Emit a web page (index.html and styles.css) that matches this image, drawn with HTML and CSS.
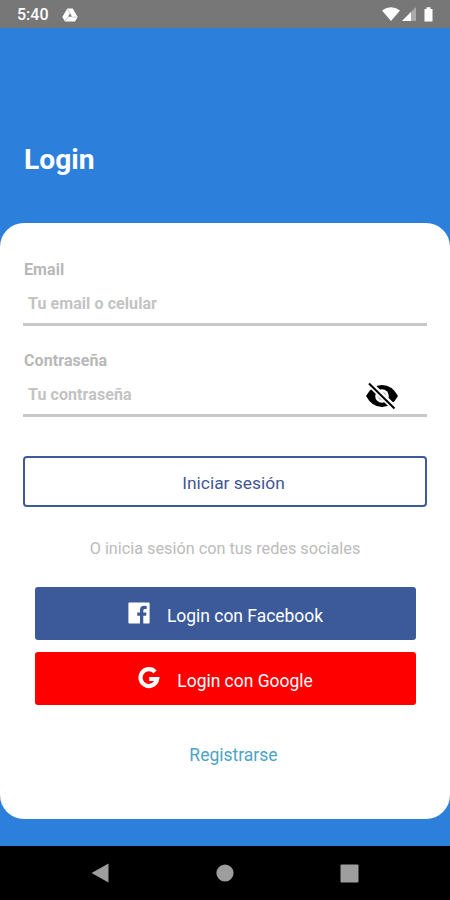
FILE: index.html
```html
<!DOCTYPE html>
<html lang="es">
<head>
<meta charset="utf-8">
<title>Login</title>
<link rel="stylesheet" href="styles.css">
</head>
<body>
<header class="status">
  <span class="time">5:40</span>
  <svg class="drive" width="16" height="14" viewBox="0 0 16 14"><path d="M5.3.5h5.4l5 8.6-2.7 4.5H3L.3 9.1z" fill="#fff"/><path d="M8 5.2 10 8.7H6z" fill="#777"/><path d="M5.6 1.2 8 5M15 9.1h-4.7M3.2 13 5.7 9" stroke="#aaa" stroke-width=".6"/></svg>
  <svg class="signals" width="54" height="16" viewBox="0 0 54 16"><path d="M0 3.5Q9-3 18 3.5L9 14z" fill="#fff"/><path d="M34 0v14H20z" fill="#aaa"/><path d="M29 5v9h-9z" fill="#fff"/><path d="M42.5 2h2V.3h4V2h2v12.5h-8z" fill="#fff"/></svg>
</header>
<main class="screen">
  <h1>Login</h1>
  <form class="card">
    <div class="field">
      <label>Email</label>
      <div class="input"><span>Tu email o celular</span></div>
    </div>
    <div class="field">
      <label>Contraseña</label>
      <div class="input"><span>Tu contraseña</span>
        <svg class="eye" width="34" height="28" viewBox="0 0 34 28"><path d="M1 14Q7 3 17 3t16 11Q27 25 17 25T1 14z"/><circle cx="17" cy="14" r="6.8" fill="#fff"/><circle cx="17" cy="14" r="4.6" fill="#ddd"/><path d="M17.5 10.8a3 3 0 0 1 3 3M14 14.5a3 3 0 0 0 2.6 2.8" fill="none" stroke="#999" stroke-width="1"/><path d="m3 0 28 27.5" stroke="#fff" stroke-width="6"/><path d="m4 1.5 25.5 25" stroke="#000" stroke-width="2"/></svg>
      </div>
    </div>
    <div class="submit"><span>Iniciar sesión</span></div>
    <p class="hint"><span>O inicia sesión con tus redes sociales</span></p>
    <div class="social facebook">
      <svg width="22" height="22" viewBox="0 0 22 22"><path d="M1.2.5h19.6q.8 0 .8.8v19.4q0 .8-.8.8h-5.5v-7.8h2.8l.4-3.1h-3.2v-2q0-1.7 1.6-1.7h1.8V4q-1-.2-2.6-.2-4.1 0-4.1 4.2v2.6H9.2v3.1H12v7.8H1.2q-.8 0-.8-.8V1.3q0-.8.8-.8z" fill="#fff"/></svg>
      <span>Login con Facebook</span>
    </div>
    <div class="social google">
      <svg width="22" height="22" viewBox="0 0 22 22"><path d="m17.1 4.9A8.4 8.4 0 1 0 19.2 12H11.2" fill="none" stroke="#fff" stroke-width="4.2"/></svg>
      <span>Login con Google</span>
    </div>
    <p class="register"><span>Registrarse</span></p>
  </form>
</main>
<nav class="nav">
  <svg width="18" height="20" viewBox="0 0 18 20"><path d="M.5 10 17.5.5v19z"/></svg>
  <svg width="18" height="18" viewBox="0 0 18 18"><circle cx="9" cy="9" r="8.6"/></svg>
  <svg width="19" height="19" viewBox="0 0 19 19"><rect x=".5" y=".5" width="18" height="18" rx="1"/></svg>
</nav>
</body>
</html>
```
FILE: styles.css
```css
* { box-sizing: border-box; }
body { margin: 0; width: 450px; height: 900px; display: flex; flex-direction: column; overflow: hidden; font-family: Roboto, sans-serif; font-size: 17px; }
svg { flex: none; display: block; }
span { white-space: nowrap; }
.status { height: 28px; background: #777; color: #fff; display: flex; align-items: center; padding: 1px 14px 0 17px; }
.time { font-size: 16px; font-weight: 500; line-height: 28px; padding-top: 1px; }
.drive { margin-left: 13px; }
.signals { margin-left: auto; }
.screen { height: 818px; background: #2c80dc; }
h1 { margin: 0; height: 195px; padding: 115px 24px 0; color: #fff; font-size: 28.2px; line-height: 34px; font-weight: 700; }
.card { height: 596px; margin: 0; padding: 35px 23px 0; background: #fff; border-radius: 24px; }
.field { height: 91px; color: #b8b8b8; font-size: 16px; font-weight: 700; letter-spacing: .08px; }
label { display: block; height: 24px; line-height: 24px; padding-left: 1px; }
.input { height: 44px; border-bottom: 3px solid #c8c8c8; padding: 0 28px 0 5px; display: flex; align-items: center; justify-content: space-between; line-height: 41px; color: #c3c3c3; }
.input span { padding-top: 1px; }
.eye { margin-top: 4px; }
.submit { margin-top: 16px; height: 51px; border: 2px solid #3f5a98; border-radius: 4px; color: #3f5592; text-align: center; line-height: 50px; padding-left: 17px; font-size: 17.4px; }
.hint { margin: 32px 0 28px; height: 20px; line-height: 20px; text-align: center; color: #bbb; font-size: 16.25px; }
.social { margin: 0 11px 12px 12px; height: 53px; border-radius: 3px; display: flex; align-items: flex-start; justify-content: center; gap: 17px; color: #fff; font-size: 17.45px; line-height: 58px; }
.social svg { margin-top: 15px; }
.facebook { background: #3c5a99; }
.google { background: #f00; }
.register { margin: 38px 0 0; text-align: center; padding-left: 17px; line-height: 24px; color: #4ba4c4; font-size: 17.5px; }
.nav { height: 54px; background: #000; fill: #9e9e9e; display: flex; align-items: center; justify-content: space-between; padding: 0 91px; }
```
